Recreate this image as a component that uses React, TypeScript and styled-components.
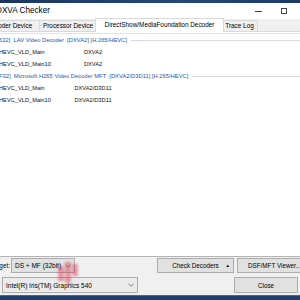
import styled, { createGlobalStyle } from 'styled-components'

const GlobalStyle = createGlobalStyle`
  html, body {
    margin: 0;
    padding: 0;
    background: #1f3e6d;
  }
  body {
    font-family: 'Liberation Sans', Arial, sans-serif;
    color: #000;
  }
`

const Viewport = styled.div`
  position: relative;
  width: 300px;
  height: 300px;
  overflow: hidden;
  display: flex;
  flex-direction: column;
  background: #1f3e6d;
`

const DesktopStrip = styled.div<{ $height: number; $top?: boolean }>`
  flex: none;
  height: ${(p) => p.$height}px;
  background: ${(p) =>
    p.$top
      ? 'linear-gradient(90deg, #1b355f, #24487c 60%, #1d3a66)'
      : 'linear-gradient(180deg, #3f659b 0, #3f659b 1px, #1f3e6d 1px)'};
`

const Window = styled.div`
  flex: none;
  width: 341px;
  height: 292px;
  margin-left: -20px;
  display: flex;
  flex-direction: column;
  background: #f0f0f0;
`

const TitleBar = styled.div`
  flex: none;
  height: 16px;
  display: flex;
  align-items: center;
  background: #fff;
`

const Title = styled.div`
  flex: 1;
  padding-left: 16px;
  font-size: 8.2px;
  line-height: 16px;
  color: #000;
`

const CaptionButton = styled.div`
  width: 25px;
  height: 16px;
  display: grid;
  place-items: center;
  color: #333;
`

const Client = styled.div`
  flex: 1;
  display: flex;
  flex-direction: column;
  min-height: 0;
`

const TabStrip = styled.div`
  flex: none;
  height: 12px;
  display: flex;
  align-items: flex-end;
`

const Tab = styled.div<{ $width: number; $selected?: boolean }>`
  position: relative;
  box-sizing: border-box;
  width: ${(p) => p.$width}px;
  height: ${(p) => (p.$selected ? 14 : 11)}px;
  margin: ${(p) => (p.$selected ? '0 -2px -1px -2px' : '0 0 0 -1px')};
  z-index: ${(p) => (p.$selected ? 1 : 0)};
  border: 1px solid #d9d9d9;
  border-bottom: none;
  background: ${(p) => (p.$selected ? '#fff' : '#f0f0f0')};
  font-size: 6.4px;
  line-height: ${(p) => (p.$selected ? 12 : 10)}px;
  text-align: center;
  white-space: nowrap;
  color: #000;
`

const Panel = styled.div`
  flex: 1;
  min-height: 0;
  display: flex;
  padding: 1px 2px;
  background: #fff;
  border: 1px solid #d9d9d9;
  border-bottom-color: #b4b4b4;
  margin-right: 14px;
`

const ListView = styled.div`
  flex: 1;
  border-top: 1px solid #e2e2e2;
  padding: 0 0 0 16px;
  background: #fff;
`

const GroupHeader = styled.div`
  height: 12px;
  display: flex;
  align-items: center;
  gap: 4px;
  padding-right: 4px;
  font-size: 5.8px;
  color: #2c56a8;
  white-space: pre;
`

const GroupLine = styled.div`
  flex: 1;
  height: 1px;
  margin-top: 1px;
  background: #d3dae6;
`

const Row = styled.div`
  height: 12px;
  display: grid;
  grid-template-columns: 60px 68px;
  align-items: center;
  font-size: 5.7px;
  color: #111;
  white-space: nowrap;
`

const TypeCell = styled.span`
  text-align: center;
`

const BottomArea = styled.div`
  flex: none;
  display: flex;
  flex-direction: column;
  gap: 4px;
  padding: 1px 0 2px;
`

const BottomRow = styled.div<{ $height: number; $left: number; $right: number }>`
  height: ${(p) => p.$height}px;
  display: flex;
  align-items: stretch;
  padding: 0 ${(p) => p.$right}px 0 ${(p) => p.$left}px;
`

const FieldLabel = styled.div`
  width: 30px;
  margin-right: 1px;
  display: flex;
  align-items: center;
  justify-content: flex-end;
  font-size: 6.4px;
`

const Combo = styled.div<{ $width: number; $light?: boolean }>`
  box-sizing: border-box;
  width: ${(p) => p.$width}px;
  display: flex;
  align-items: center;
  justify-content: space-between;
  padding: 0 3px 0 3px;
  border: 1px solid #adadad;
  background: ${(p) => (p.$light ? '#ebebeb' : '#e1e1e1')};
  font-size: 6.5px;
  white-space: nowrap;
`

const Spacer = styled.div`
  flex: 1;
`

const Button = styled.div<{ $width: number }>`
  box-sizing: border-box;
  width: ${(p) => p.$width}px;
  display: grid;
  grid-template-columns: 1fr auto 1fr;
  align-items: center;
  padding: 0 3px;
  border: 1px solid #adadad;
  background: #e1e1e1;
  font-size: 6.3px;
  white-space: nowrap;
  color: #000;

  & + & {
    margin-left: 3px;
  }
`

const ButtonText = styled.span`
  grid-column: 2;
`

const ButtonArrow = styled.span`
  grid-column: 3;
  justify-self: end;
  font-size: 4.5px;
`

const Watermark = styled.svg`
  position: absolute;
  left: 55px;
  top: 258px;
  width: 26px;
  height: 28px;
  pointer-events: none;
`

function Chevron() {
  return (
    <svg width="6" height="4" viewBox="0 0 6 4" aria-hidden="true">
      <path d="M0.5 0.8 L3 3.2 L5.5 0.8" fill="none" stroke="#606060" strokeWidth="0.8" />
    </svg>
  )
}

const decoderGroups = [
  {
    header: '632]  LAV Video Decoder  [DXVA2] [H.265/HEVC]',
    rows: [
      ['HEVC_VLD_Main', 'DXVA2'],
      ['HEVC_VLD_Main10', 'DXVA2'],
    ],
  },
  {
    header: 'F32]  Microsoft H265 Video Decoder MFT  [DXVA2/D3D11] [H.265/HEVC]',
    rows: [
      ['HEVC_VLD_Main', 'DXVA2/D3D11'],
      ['HEVC_VLD_Main10', 'DXVA2/D3D11'],
    ],
  },
]

const tabs = [
  { label: 'Decoder Device', width: 61 },
  { label: 'Processor Device', width: 58 },
  { label: 'DirectShow/MediaFoundation Decoder', width: 129, selected: true },
  { label: 'Trace Log', width: 37 },
]

export default function App() {
  return (
    <>
      <GlobalStyle />
      <Viewport>
        <DesktopStrip $height={3} $top />
        <Window>
          <TitleBar>
            <Title>DXVA Checker</Title>
            <CaptionButton>
              <svg width="7" height="1" viewBox="0 0 7 1" aria-hidden="true">
                <rect width="7" height="1" fill="#444" />
              </svg>
            </CaptionButton>
            <CaptionButton>
              <svg width="6" height="6" viewBox="0 0 6 6" aria-hidden="true">
                <rect x="0.5" y="0.5" width="5" height="5" fill="none" stroke="#444" />
              </svg>
            </CaptionButton>
            <CaptionButton>
              <svg width="6" height="6" viewBox="0 0 6 6" aria-hidden="true">
                <path d="M0 0 L6 6 M6 0 L0 6" stroke="#444" />
              </svg>
            </CaptionButton>
          </TitleBar>

          <Client>
            <TabStrip>
              {tabs.map((tab) => (
                <Tab key={tab.label} $width={tab.width} $selected={tab.selected}>
                  {tab.label}
                </Tab>
              ))}
            </TabStrip>

            <Panel>
              <ListView>
                {decoderGroups.map((group) => (
                  <div key={group.header}>
                    <GroupHeader>
                      <span>{group.header}</span>
                      <GroupLine />
                    </GroupHeader>
                    {group.rows.map(([name, type]) => (
                      <Row key={name}>
                        <span>{name}</span>
                        <TypeCell>{type}</TypeCell>
                      </Row>
                    ))}
                  </div>
                ))}
              </ListView>
            </Panel>

            <BottomArea>
              <BottomRow $height={15} $left={0} $right={9}>
                <FieldLabel>Target:</FieldLabel>
                <Combo $width={64}>
                  <span>DS + MF (32bit)</span>
                  <Chevron />
                </Combo>
                <Spacer />
                <Button $width={77}>
                  <ButtonText>Check Decoders</ButtonText>
                  <ButtonArrow>▲</ButtonArrow>
                </Button>
                <Button $width={75}>
                  <ButtonText>DSF/MFT Viewer...</ButtonText>
                </Button>
              </BottomRow>
              <BottomRow $height={16} $left={22} $right={23}>
                <Combo $width={136} $light>
                  <span>Intel(R) Iris(TM) Graphics 540</span>
                  <Chevron />
                </Combo>
                <Spacer />
                <Button $width={64}>
                  <ButtonText>Close</ButtonText>
                </Button>
              </BottomRow>
            </BottomArea>
          </Client>
        </Window>
        <DesktopStrip $height={5} />

        <Watermark viewBox="0 0 26 28" aria-hidden="true">
          <defs>
            <filter id="soft" x="-30%" y="-30%" width="160%" height="160%">
              <feGaussianBlur stdDeviation="1.2" />
            </filter>
          </defs>
          <g filter="url(#soft)" fill="rgb(214, 50, 80)" fillOpacity="0.45">
            <rect x="3" y="8" width="6" height="15" />
            <rect x="10" y="4" width="6" height="21" />
            <rect x="17" y="6" width="6" height="12" />
          </g>
        </Watermark>
      </Viewport>
    </>
  )
}
